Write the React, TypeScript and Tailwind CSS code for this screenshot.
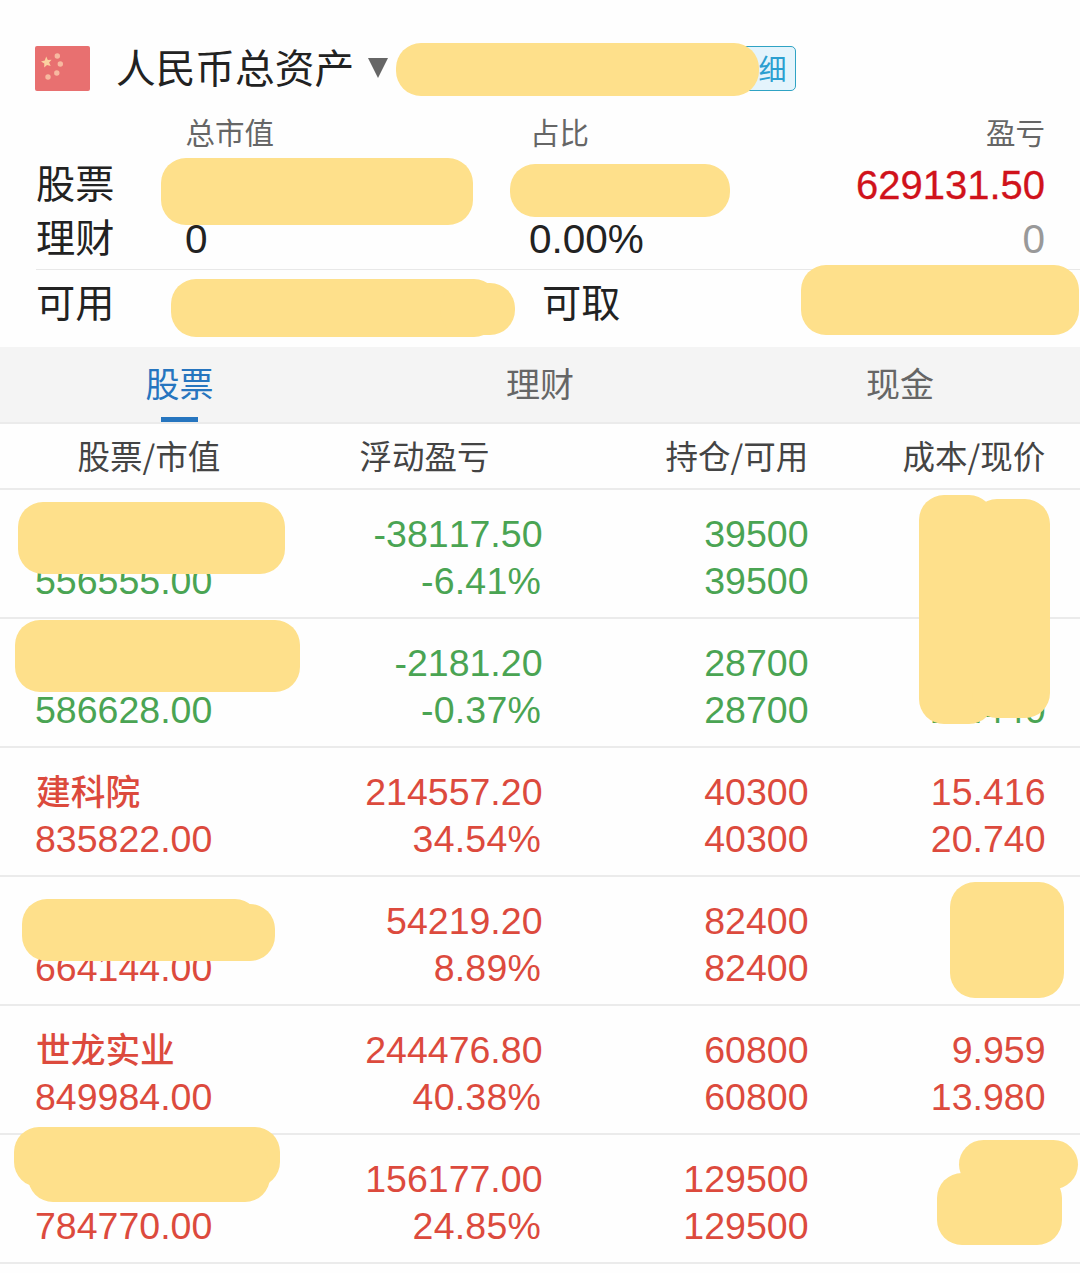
import React from "react";
import clsx from "clsx";

type Holding = {
  name: string;
  value: string;
  profit: string;
  percent: string;
  amount: string;
  available: string;
  cost: string;
  price: string;
  down?: boolean;
};

const holdings: Holding[] = [
  { name: "", value: "556555.00", profit: "-38117.50", percent: "-6.41%", amount: "39500", available: "39500", cost: "", price: "", down: true },
  { name: "", value: "586628.00", profit: "-2181.20", percent: "-0.37%", amount: "28700", available: "28700", cost: "", price: "20.440", down: true },
  { name: "建科院", value: "835822.00", profit: "214557.20", percent: "34.54%", amount: "40300", available: "40300", cost: "15.416", price: "20.740" },
  { name: "", value: "664144.00", profit: "54219.20", percent: "8.89%", amount: "82400", available: "82400", cost: "", price: "" },
  { name: "世龙实业", value: "849984.00", profit: "244476.80", percent: "40.38%", amount: "60800", available: "60800", cost: "9.959", price: "13.980" },
  { name: "", value: "784770.00", profit: "156177.00", percent: "24.85%", amount: "129500", available: "129500", cost: "", price: "" },
];

const tabs = ["股票", "理财", "现金"];

// marker strokes that hide private values
const marks = [
  "left-[396px] top-[43px] w-[363px] h-[53px]",
  "left-[161px] top-[158px] w-[312px] h-[67px]",
  "left-[510px] top-[164px] w-[220px] h-[53px]",
  "left-[171px] top-[279px] w-[328px] h-[58px]",
  "left-[440px] top-[283px] w-[75px] h-[52px]",
  "left-[801px] top-[265px] w-[278px] h-[70px]",
  "left-[18px] top-[502px] w-[267px] h-[72px]",
  "left-[15px] top-[620px] w-[285px] h-[72px]",
  "left-[919px] top-[495px] w-[75px] h-[229px]",
  "left-[972px] top-[499px] w-[78px] h-[219px]",
  "left-[22px] top-[899px] w-[238px] h-[62px]",
  "left-[200px] top-[904px] w-[75px] h-[57px]",
  "left-[950px] top-[882px] w-[114px] h-[116px]",
  "left-[14px] top-[1127px] w-[266px] h-[60px]",
  "left-[28px] top-[1142px] w-[242px] h-[60px]",
  "left-[959px] top-[1140px] w-[119px] h-[49px]",
  "left-[937px] top-[1173px] w-[125px] h-[72px]",
];

const Flag = () => (
  <svg width="55" height="45" viewBox="0 0 55 45">
    <rect width="55" height="45" rx="2" fill="#e87070" />
    <path
      d="M11.2 10.6l1.6 3.4 3.8-.3-2.5 2.8 1.6 3.5-3.7-1.1-2.8 2.5.1-4-3.3-2 3.8-1z"
      fill="#fbd2a0"
    />
    <g fill="#f7b9a0">
      <circle cx="22.3" cy="10" r="2.7" />
      <circle cx="25.3" cy="18" r="2.7" />
      <circle cx="21.8" cy="27" r="2.7" />
      <circle cx="13" cy="31" r="2.7" />
    </g>
  </svg>
);

const Summary = () => {
  return (
    <div className="h-[347px] pt-[39px] text-[#222]">
      <div className="flex h-[58px] items-center pl-[35px]">
        <Flag />
        <h1 className="ml-[26px] pt-[2px] text-[39.7px] leading-[58px]">人民币总资产</h1>
        <svg className="ml-[14px]" width="20" height="20" viewBox="0 0 20 20">
          <path d="M0 0h20L10 20z" fill="#666" />
        </svg>
        <span className="ml-[318px] flex h-[45px] w-[90px] items-center justify-end gap-1 rounded-[5px] border border-[#2fa3c4] bg-[#e4f4fc] pr-[8.5px] pt-[5px] text-[28px] text-[#2b9fd0]">
          <span>明</span>
          <span>细</span>
        </span>
      </div>

      <div className="flex h-[61px] items-center pl-[185.5px] pr-[35px] pt-[13px] text-[29.5px] text-[#666]">
        <span className="w-[344.5px]">总市值</span>
        <span>占比</span>
        <span className="ml-auto">盈亏</span>
      </div>

      <div className="flex h-[54px] items-center px-[35px] text-[39.2px]">
        <span className="pl-px">股票</span>
        <span className="ml-auto text-[40px] text-[#d0121b] [-webkit-text-stroke:0.3px]">629131.50</span>
      </div>
      <div className="flex h-[54px] items-center px-[35px] text-[39.2px]">
        <span className="w-[150px] pl-px">理财</span>
        <span className="w-[344px] text-[40.5px]">0</span>
        <span className="text-[40.5px]">0.00%</span>
        <span className="ml-auto text-[40.5px] text-[#999]">0</span>
      </div>

      <div className="ml-[36px] mt-[3px] flex h-[70px] items-center border-t border-[#e8e8e8] text-[39.2px]">
        <span className="w-[506px]">可用</span>
        <span>可取</span>
      </div>
    </div>
  );
};

const Tabs = () => {
  return (
    <div className="grid h-[77px] grid-cols-3 border-b-2 border-[#ebebeb] bg-[#f4f4f4] text-[34px] text-[#666]">
      {tabs.map((tab, i) => (
        <div
          key={tab}
          className={clsx("flex flex-col items-center justify-between", i === 0 && "pr-px text-[#2675bf]")}
        >
          <span className="leading-[70px] h-[70px] pt-[3px]">{tab}</span>
          {i === 0 && <span className="h-[5px] w-[37px] bg-[#2675bf]" />}
        </div>
      ))}
    </div>
  );
};

const HoldingRow = ({ item }: { item: Holding }) => {
  return (
    <div
      className={clsx(
        "grid h-[129px] grid-cols-[254px_253.5px_266px_237px] border-b-2 border-[#ebebeb] pl-[35px] pt-[21px] text-right text-[37.5px] leading-[47px]",
        item.down ? "text-[#4aa453]" : "text-[#dc4a3d]"
      )}
    >
      <div className="text-left">
        <div className="h-[47px] pt-px pl-px text-[34.7px] font-medium">{item.name}</div>
        <div className="h-[47px]">{item.value}</div>
      </div>
      <div>
        <div className="h-[47px]">{item.profit}</div>
        <div className="h-[47px] pr-[1.5px] tracking-[0.2px]">{item.percent}</div>
      </div>
      <div>
        <div className="h-[47px]">{item.amount}</div>
        <div className="h-[47px]">{item.available}</div>
      </div>
      <div>
        <div className="h-[47px]">{item.cost}</div>
        <div className="h-[47px]">{item.price}</div>
      </div>
    </div>
  );
};

const App = () => {
  return (
    <div className="relative h-[1273px] w-[1080px] overflow-hidden bg-[#fefefe] font-['Liberation_Sans','Noto_Sans_CJK_SC',sans-serif] [font-kerning:none]">
      <Summary />
      <Tabs />
      <div className="grid h-[66px] grid-cols-[282px_306px_237px_178px] border-b-2 border-[#ebebeb] pl-[77.5px] font-['Noto_Sans_CJK_SC',sans-serif] text-[32.5px] leading-[61px] text-[#444]">
        <span>股票/市值</span>
        <span>浮动盈亏</span>
        <span>持仓/可用</span>
        <span>成本/现价</span>
      </div>
      {holdings.map((item) => (
        <HoldingRow key={item.value} item={item} />
      ))}

      {marks.map((mark) => (
        <div key={mark} className={clsx("absolute rounded-[25px] bg-[#fee08b]", mark)} />
      ))}
    </div>
  );
};

export default App;
